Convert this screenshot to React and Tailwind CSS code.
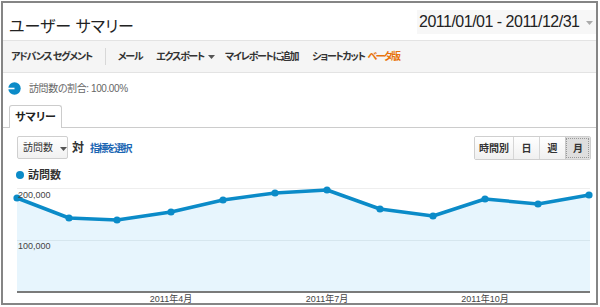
import React from 'react';

const pts = [
  [14, 16], [66, 36], [114, 38], [168, 30], [220, 18], [272, 11],
  [324, 8], [377, 27], [430, 34], [482, 17], [535, 22], [586, 13]
];

const blue = '#0b8bc8';

function Caret({ color = '#555' }) {
  return (
    <svg width="7" height="4" viewBox="0 0 7 4" className="inline-block">
      <path d="M0 0h7L3.5 4z" fill={color} />
    </svg>
  );
}

function Chart() {
  const line = pts.map(p => p.join(',')).join(' ');
  const area = `14,110 ${line} 587,13 587,110`;
  return (
    <svg width="593" height="123" className="block">
      <polygon points={area} fill="#e7f5fd" />
      <line x1="14" y1="6.5" x2="587" y2="6.5" stroke="#eeeeee" />
      <line x1="14" y1="58.5" x2="587" y2="58.5" stroke="#d6e6ee" />
      <polyline points={line} fill="none" stroke={blue} strokeWidth="3.5" strokeLinejoin="round" />
      {pts.map(([x, y]) => (
        <circle key={x} cx={x} cy={y} r="3.6" fill={blue} />
      ))}
      <line x1="14" y1="110" x2="587" y2="110" stroke="#7a7a7a" strokeWidth="2" />
      <g fontSize="9" fill="#444" fontFamily="'Liberation Sans','Noto Sans CJK JP',sans-serif">
        <text x="15" y="16">200,000</text>
        <text x="15" y="67">100,000</text>
        <text x="168" y="120" textAnchor="middle">2011年4月</text>
        <text x="324" y="120" textAnchor="middle">2011年7月</text>
        <text x="482" y="120" textAnchor="middle">2011年10月</text>
      </g>
    </svg>
  );
}

export default function App() {
  return (
    <div className="w-[600px] h-[307px] bg-white pl-px pt-px font-['Liberation_Sans','Noto_Sans_CJK_JP',sans-serif] [font-feature-settings:'palt']">
      <div className="w-[597px] h-[304px] border-2 border-[#858585] flex flex-col overflow-hidden">
        {/* header */}
        <div className="flex justify-between h-[37px] shrink-0">
          <div className="pl-[6px] pt-[14px] text-[16px] leading-[20px] text-[#222]">ユーザー サマリー</div>
          <div className="mt-[7px] h-[24px] w-[179px] bg-[#f7f7f7] flex items-center pl-[2px]">
            <span className="text-[16px] tracking-[-0.5px] text-[#222]">2011/01/01 - 2011/12/31</span>
            <span className="ml-auto mr-[3px]"><Caret color="#aaa" /></span>
          </div>
        </div>

        {/* toolbar */}
        <div className="h-[33px] shrink-0 border-y border-[#e3e3e3] bg-[#f5f5f5] flex items-center text-[10px] tracking-[-1.3px] font-bold text-[#333] pl-[8px]">
          <span>アドバンス セグメント</span>
          <span className="ml-[13px] w-px h-[17px] bg-[#d8d8d8]" />
          <span className="ml-[12px]">メール</span>
          <span className="ml-[14px] flex items-center gap-[4px]">エクスポート <Caret /></span>
          <span className="ml-[10px]">マイレポートに追加</span>
          <span className="ml-[14px]">ショートカット</span>
          <span className="ml-[3px] tracking-[-1.8px] text-[#e8730c]">ベータ版</span>
        </div>

        {/* percentage */}
        <div className="h-[30px] shrink-0 flex items-center pl-[5px] text-[10px] tracking-[-0.4px] text-[#666]">
          <svg width="13" height="13" viewBox="0 0 13 13">
            <circle cx="6.5" cy="6.5" r="6.2" fill={blue} />
            <line x1="0" y1="6.5" x2="6.5" y2="6.5" stroke="#fff" strokeWidth="1.6" />
          </svg>
          <span className="ml-[8px]">訪問数の割合: 100.00%</span>
        </div>

        {/* tabs */}
        <div className="mt-[2px] shrink-0 border-b border-[#cccccc] pl-[6px] flex">
          <div className="-mb-px h-[23px] w-[53px] border border-b-0 border-[#cccccc] rounded-t-[3px] bg-white flex items-center justify-center text-[11px] font-bold text-[#222]">
            サマリー
          </div>
        </div>

        {/* controls */}
        <div className="shrink-0 pt-[8px] pl-[14px] pr-[5px] flex items-start">
          <div className="h-[23px] w-[51px] border border-[#cfcfcf] rounded-[2px] bg-gradient-to-b from-white to-[#f1f1f1] flex items-center pl-[5px] text-[10px] text-[#333]">
            訪問数
            <span className="ml-[7px] mt-[1px]"><Caret /></span>
          </div>
          <span className="ml-[4px] mt-[3px] text-[12px] text-[#333] font-bold">対</span>
          <span className="ml-[6px] mt-[5px] text-[10px] tracking-[-1.8px] font-bold text-[#1b66b3]">指標を選択</span>
          <div className="ml-auto flex h-[24px] border border-[#cfcfcf] rounded-[2px] text-[10px] font-bold text-[#333] overflow-hidden">
            <div className="w-[38px] flex items-center justify-center bg-gradient-to-b from-white to-[#f0f0f0]">時間別</div>
            <div className="w-[26px] flex items-center justify-center border-l border-[#d6d6d6] bg-gradient-to-b from-white to-[#f0f0f0]">日</div>
            <div className="w-[26px] flex items-center justify-center border-l border-[#d6d6d6] bg-gradient-to-b from-white to-[#f0f0f0]">週</div>
            <div className="w-[25px] flex items-center justify-center border-l border-[#c8c8c8] bg-[#dedede] outline-1 outline-dotted outline-[#999] -outline-offset-2">月</div>
          </div>
        </div>

        {/* legend */}
        <div className="shrink-0 mt-[8px] h-[14px] pl-[13px] flex items-center text-[11px] font-bold text-[#333]">
          <span className="w-[8px] h-[8px] rounded-full bg-[#0b8bc8]" />
          <span className="ml-[4px]">訪問数</span>
        </div>

        <Chart />
      </div>
    </div>
  );
}
